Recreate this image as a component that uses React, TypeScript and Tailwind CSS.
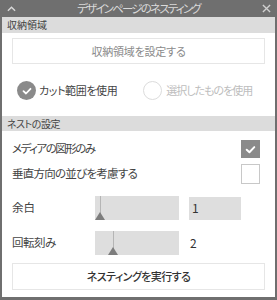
import React from "react";

function Check({ className = "" }: { className?: string }) {
  return (
    <svg viewBox="0 0 12 12" className={className}>
      <path d="M2.5 6.2 L5 8.5 L9.5 3.8" fill="none" stroke="white" strokeWidth="1.8" strokeLinecap="round" strokeLinejoin="round" />
    </svg>
  );
}

function Slider({ pos }: { pos: number }) {
  return (
    <div className="relative w-[84px] h-[24px] bg-[#dedede]">
      <div className="absolute top-0 bottom-[6px] w-px bg-[#b5b5b5]" style={{ left: pos }} />
      <div
        className="absolute bottom-0 w-0 h-0 border-l-[5px] border-r-[5px] border-b-[8px] border-l-transparent border-r-transparent border-b-[#7d7d7d]"
        style={{ left: pos - 5 }}
      />
    </div>
  );
}

export default function App() {
  return (
    <div
      className="w-[277px] h-[300px] bg-[#6f6f6f] flex flex-col pl-[2px] pr-[2px] pb-[3px] font-['Noto_Sans_CJK_JP','Noto_Sans',sans-serif] whitespace-nowrap"
      style={{ fontFeatureSettings: '"palt" 1' }}
    >
      <div className="h-[17px] flex items-center justify-between relative">
        <svg viewBox="0 0 10 6" className="w-[9px] h-[6px] ml-[5px]">
          <path d="M1 5 L5 1 L9 5" fill="none" stroke="#d8d8d8" strokeWidth="1.6" />
        </svg>
        <div className="absolute inset-0 flex justify-center">
          <span className="text-[11.5px] leading-[17px] text-[#d9d9d9] tracking-[-1.8px]">
            デザインページのネスティング
          </span>
        </div>
        <svg viewBox="0 0 10 10" className="w-[9px] h-[9px] mr-[4px]">
          <path d="M1 1 L9 9 M9 1 L1 9" stroke="#d0d0d0" strokeWidth="1.5" />
        </svg>
      </div>
      <div className="flex-1 bg-white flex flex-col">
        <div className="h-[16px] bg-[#dcdcdc] text-[10px] leading-[16px] text-[#444] pl-[5px]">
          収納領域
        </div>
        <div className="mt-[5px] mx-[10px] h-[26px] border border-[#e6e6e6] flex items-center justify-center text-[11px] text-[#8a8a8a] tracking-[-0.2px]">
          収納領域を設定する
        </div>
        <div className="mt-[17px] h-[19px] flex items-center">
          <div className="ml-[15px] w-[19px] h-[19px] rounded-full bg-[#8a8a8a] flex items-center justify-center">
            <Check className="w-[12px] h-[12px]" />
          </div>
          <span className="ml-[3px] text-[11px] text-[#444] tracking-[-0.4px]">カット範囲を使用</span>
          <div className="ml-[26px] w-[19px] h-[19px] rounded-full border-[1.5px] border-[#dcdcdc]" />
          <span className="ml-[4px] text-[11px] text-[#bdbdbd] tracking-[-1px]">選択したものを使用</span>
        </div>
        <div className="mt-[16px] h-[15px] bg-[#dcdcdc] text-[10px] leading-[15px] text-[#444] pl-[5px] tracking-[-0.5px]">
          ネストの設定
        </div>
        <div className="mt-[9px] h-[18px] flex items-center justify-between pl-[10px] pr-[15px]">
          <span className="text-[11.5px] text-[#444] tracking-[-1.5px]">メディアの図形のみ</span>
          <div className="w-[19px] h-[18px] bg-[#8a8a8a] flex items-center justify-center">
            <Check className="w-[13px] h-[13px]" />
          </div>
        </div>
        <div className="mt-[6px] h-[20px] flex items-center justify-between pl-[10px] pr-[15px]">
          <span className="text-[11.5px] text-[#444] tracking-[-0.75px]">垂直方向の並びを考慮する</span>
          <div className="w-[19px] h-[20px] border border-[#c8c8c8] bg-white" />
        </div>
        <div className="mt-[12px] h-[24px] flex items-center pl-[10px]">
          <span className="w-[83px] text-[11.5px] text-[#444]">余白</span>
          <Slider pos={5} />
          <div className="ml-[10px] w-[52px] h-[23px] bg-[#dedede] text-[12px] text-[#333] flex items-center pl-[3px]">
            1
          </div>
        </div>
        <div className="mt-[11px] h-[23px] flex items-center pl-[10px]">
          <span className="w-[83px] text-[11.5px] text-[#444] tracking-[-0.5px]">回転刻み</span>
          <Slider pos={18} />
          <span className="ml-[11px] text-[12px] text-[#333]">2</span>
        </div>
        <div className="mt-[9px] mx-[10px] h-[27px] border border-[#e6e6e6] flex items-center justify-center text-[11px] text-[#333] font-medium tracking-[-0.6px]">
          ネスティングを実行する
        </div>
      </div>
    </div>
  );
}
